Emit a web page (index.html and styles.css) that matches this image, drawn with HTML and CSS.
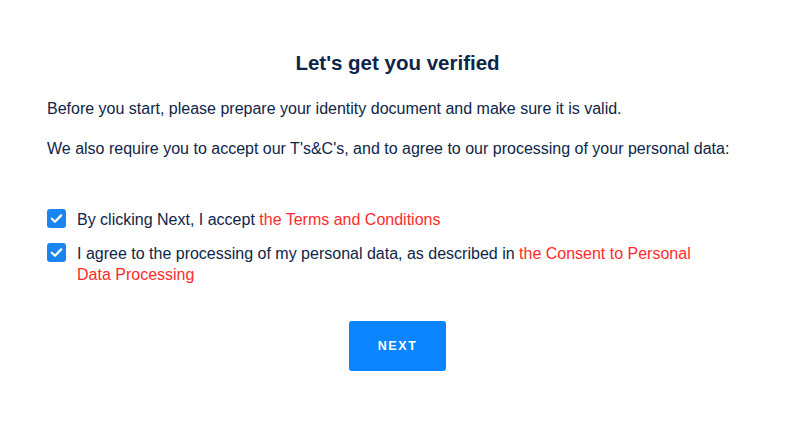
FILE: index.html
```html
<!DOCTYPE html>
<html lang="en">
<head>
    <meta charset="UTF-8">
    <meta name="viewport" content="width=device-width, initial-scale=1.0">
    <title>Verification</title>
    <link rel="stylesheet" href="styles.css">
</head>
<body>
    <div class="container">
        <h1>Let's get you verified</h1>

        <p>Before you start, please prepare your identity document and make sure it is valid.</p>
        <p>We also require you to accept our T's&amp;C's, and to agree to our processing of your personal data:</p>

        <div class="consents">
            <label class="consent">
                <input type="checkbox" checked>
                <span class="box">
                    <svg viewBox="0 0 20 20" width="20" height="20"><path d="M4.5 10.2l3.7 3.6 7.3-7.5" fill="none" stroke="#fff" stroke-width="2.6" stroke-linecap="round" stroke-linejoin="round"/></svg>
                </span>
                <span class="text">By clicking Next, I accept <a href="#">the Terms and Conditions</a></span>
            </label>
            <label class="consent">
                <input type="checkbox" checked>
                <span class="box">
                    <svg viewBox="0 0 20 20" width="20" height="20"><path d="M4.5 10.2l3.7 3.6 7.3-7.5" fill="none" stroke="#fff" stroke-width="2.6" stroke-linecap="round" stroke-linejoin="round"/></svg>
                </span>
                <span class="text">I agree to the processing of my personal data, as described in <a href="#">the Consent to Personal Data Processing</a></span>
            </label>
        </div>

        <div class="actions">
            <button class="next-button">NEXT</button>
        </div>
    </div>
</body>
</html>
```

FILE: styles.css
```css
body {
    font-family: "Liberation Sans", Arial, sans-serif;
    margin: 0;
    padding: 0;
    background-color: #fff;
    color: #0e2548;
}
.container {
    width: 795px;
    box-sizing: border-box;
    padding: 50px 47px 0;
}
h1 {
    text-align: center;
    font-size: 20.5px;
    font-weight: bold;
    margin: 0 0 23px;
    line-height: 26px;
}
p {
    font-size: 16px;
    line-height: 20px;
    margin: 0 0 20px;
}
.consents {
    margin-top: 50px;
    max-width: 660px;
}
.consent {
    display: flex;
    align-items: flex-start;
    gap: 11px;
    font-size: 16px;
    line-height: 21px;
    margin-bottom: 13px;
    cursor: pointer;
}
.consent input {
    display: none;
}
.consent .box {
    flex: none;
    width: 19px;
    height: 19px;
    border-radius: 3px;
    background-color: #1a85f0;
    display: flex;
    align-items: center;
    justify-content: center;
}
.consent .box svg {
    width: 17px;
    height: 17px;
}
.consent a {
    color: #ff2b2b;
    text-decoration: none;
}
.actions {
    display: flex;
    justify-content: center;
    margin-top: 36px;
}
.next-button {
    width: 97px;
    height: 50px;
    border: none;
    border-radius: 3px;
    background-color: #0a84ff;
    color: #fff;
    font-family: "Liberation Sans", Arial, sans-serif;
    font-size: 12.5px;
    font-weight: bold;
    letter-spacing: 1.6px;
    cursor: pointer;
}
```
